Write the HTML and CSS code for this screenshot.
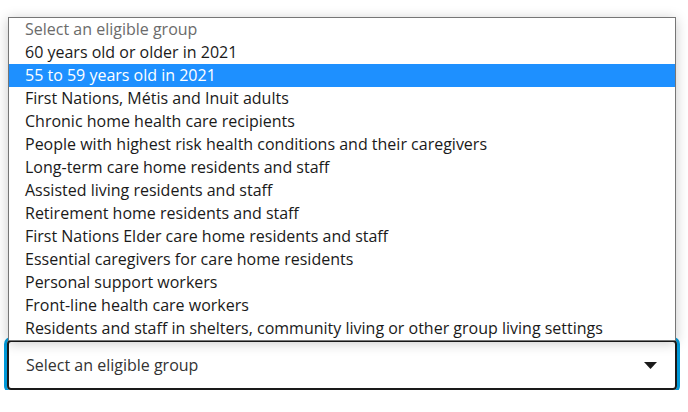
FILE: index.html
```html
<!DOCTYPE html>
<html lang="en">
<head>
<meta charset="utf-8">
<title>Select an eligible group</title>
<link rel="stylesheet" href="styles.css">
</head>
<body>
<div class="field">
  <ul class="listbox" role="listbox">
    <li class="option placeholder">Select an eligible group</li>
    <li class="option">60 years old or older in 2021</li>
    <li class="option selected">55 to 59 years old in 2021</li>
    <li class="option">First Nations, Métis and Inuit adults</li>
    <li class="option">Chronic home health care recipients</li>
    <li class="option">People with highest risk health conditions and their caregivers</li>
    <li class="option">Long-term care home residents and staff</li>
    <li class="option">Assisted living residents and staff</li>
    <li class="option">Retirement home residents and staff</li>
    <li class="option">First Nations Elder care home residents and staff</li>
    <li class="option">Essential caregivers for care home residents</li>
    <li class="option">Personal support workers</li>
    <li class="option">Front-line health care workers</li>
    <li class="option">Residents and staff in shelters, community living or other group living settings</li>
  </ul>
  <div class="select">
    <span class="select-label">Select an eligible group</span>
    <svg class="caret" width="13" height="7" viewBox="0 0 13 7"><path d="M0 0H13L6.5 7Z" fill="#1a1a1a"/></svg>
  </div>
</div>
</body>
</html>
```
FILE: styles.css
```css
html, body {
  margin: 0;
  padding: 0;
  background: #fff;
}
body {
  font-family: "Open Sans", "Noto Sans", sans-serif;
  font-size: 16px;
  color: #1a1a1a;
}
.field {
  display: flex;
  flex-direction: column;
  padding-top: 17px;
}
.listbox {
  position: relative;
  z-index: 1;
  list-style: none;
  margin: 0 0 0 8px;
  padding: 0;
  width: 666px;
  border: 1px solid #767676;
  background: #fff;
  box-shadow: 0 2px 12px rgba(0, 0, 0, 0.22);
}
.option {
  height: 23px;
  line-height: 23px;
  padding-left: 16px;
  white-space: nowrap;
  color: #1a1a1a;
}
.placeholder {
  color: #6b6b6b;
}
.selected {
  background: #1e90ff;
  color: #fff;
}
.select {
  box-sizing: border-box;
  margin: -1px 0 0 7px;
  width: 670px;
  height: 50px;
  border: 2px solid #1a1a1a;
  border-radius: 4px;
  box-shadow: 0 0 0 3px #0099d8;
  display: flex;
  align-items: center;
  justify-content: space-between;
  padding: 0 18px 0 17px;
  color: #333;
}
.caret {
  display: block;
  margin-top: 1px;
}
```
